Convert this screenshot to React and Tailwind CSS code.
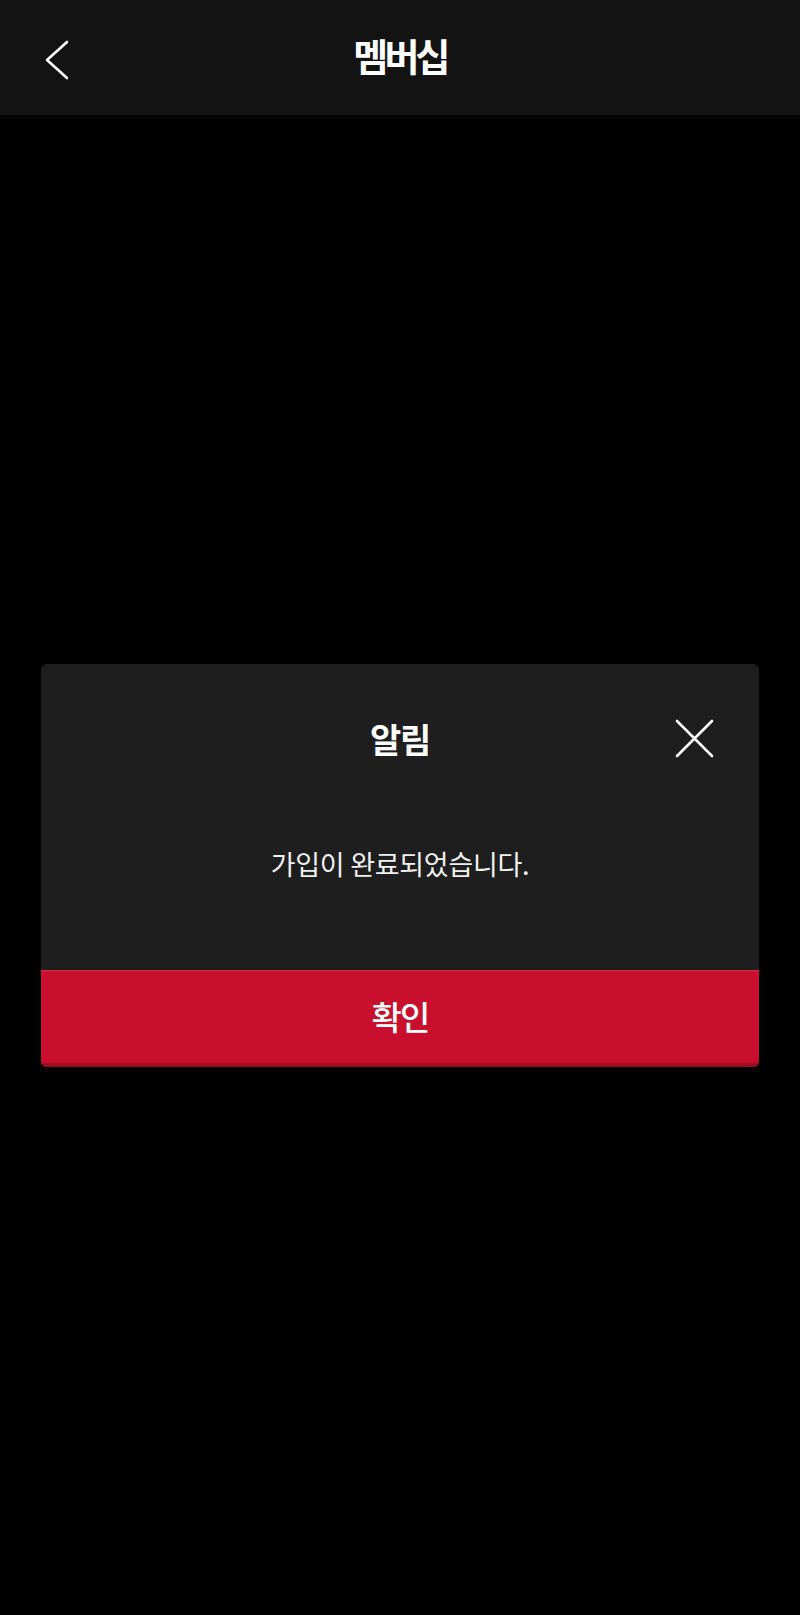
const font = { fontFamily: '"Noto Sans CJK KR", "Noto Sans", sans-serif' };

const BackIcon = () => (
  <svg width="26" height="40" viewBox="0 0 26 40" fill="none">
    <polyline
      points="23,2 3,20 23,38"
      stroke="white"
      strokeWidth="2.6"
      strokeLinecap="round"
      strokeLinejoin="round"
    />
  </svg>
);

const CloseIcon = () => (
  <svg width="39" height="39" viewBox="0 0 39 39" fill="none">
    <path d="M2 2L37 37M37 2L2 37" stroke="white" strokeWidth="2.6" strokeLinecap="round" />
  </svg>
);

const App = () => {
  return (
    <div className="flex min-h-[1615px] flex-col bg-black" style={font}>
      {/* Header */}
      <header className="relative flex h-[115px] shrink-0 items-center justify-center bg-[#131313]">
        <button className="absolute left-[44px] top-[40px]">
          <BackIcon />
        </button>
        <h1 className="mb-[6px] text-[38px] font-bold tracking-[-0.1em] text-white">멤버십</h1>
      </header>

      {/* Alert dialog */}
      <div className="flex flex-1 items-center justify-center px-[41px]">
        <div className="w-full overflow-hidden rounded-[6px] bg-[#1e1e1e]">
          <div className="relative flex h-[150px] items-center justify-center">
            <span className="text-[34px] font-bold tracking-[-0.04em] text-white">알림</span>
            <button className="absolute right-[45px] top-[55px]">
              <CloseIcon />
            </button>
          </div>
          <div className="flex h-[102px] items-center justify-center">
            <p className="text-[27px] tracking-[-0.01em] text-[#f0f0f0]">가입이 완료되었습니다.</p>
          </div>
          <div className="h-[54px]" />
          <button className="flex h-[97px] w-full items-center justify-center border-t border-b-4 border-t-[#d42a42] border-b-[#9e0c22] bg-[#c8102e] text-[33px] font-medium tracking-[-0.06em] text-white">
            확인
          </button>
        </div>
      </div>
    </div>
  );
};

export default App;
